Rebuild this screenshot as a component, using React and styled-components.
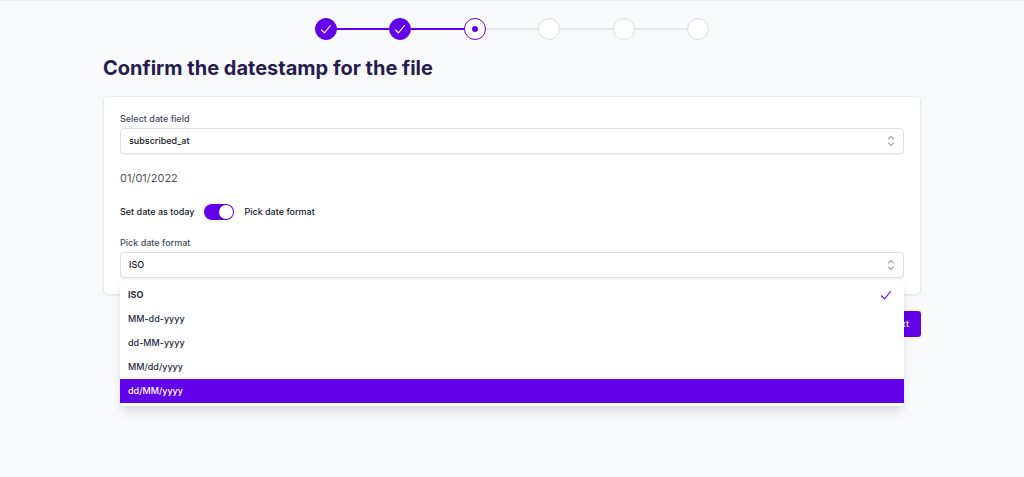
import React, { useState } from "react";
import styled, { ThemeProvider, createGlobalStyle } from "styled-components";

const theme = {
  colors: {
    bg: "#f9fafc",
    white: "#ffffff",
    primary: "#6300ea",
    heading: "#261c4f",
    label: "#414b5a",
    text: "#111827",
    option: "#262c40",
    border: "#dfe0e7",
    icon: "#a6aab4",
  },
};

const GlobalStyle = createGlobalStyle`
  * {
    box-sizing: border-box;
  }

  body {
    margin: 0;
    background-color: ${({ theme }) => theme.colors.bg};
    color: ${({ theme }) => theme.colors.text};
    font-family: Inter, "Liberation Sans", sans-serif;
    font-size: 9px;
    font-weight: 500;
    line-height: 16px;
  }

  button, select, input {
    font: inherit;
    color: inherit;
  }
`;

const Page = styled.main`
  min-height: 100vh;
  border-top: 1px solid #eff0f3;
  padding: 17px 16px;
`;

const Container = styled.div`
  max-width: 818px;
  margin: 0 auto;
`;

const StepList = styled.ol`
  list-style: none;
  display: flex;
  max-width: 394px;
  margin: 0 auto;
  padding: 0;
`;

const Step = styled.li`
  display: flex;
  align-items: center;
  flex: 1;

  &:last-child {
    flex: none;
  }

  &:not(:last-child)::after {
    content: "";
    flex: 1;
    height: 2px;
    background-color: ${({ theme, $status }) =>
      $status === "complete" ? theme.colors.primary : "#e5e6eb"};
  }
`;

const StepButton = styled.button`
  display: flex;
  align-items: center;
  justify-content: center;
  width: 22px;
  height: 22px;
  padding: 0;
  border-radius: 50%;
  cursor: pointer;
  color: ${({ theme }) => theme.colors.white};
  border: 1px solid
    ${({ theme, $status }) => ($status === "upcoming" ? "#dcdde3" : theme.colors.primary)};
  background-color: ${({ theme, $status }) =>
    $status === "complete" ? theme.colors.primary : theme.colors.white};
`;

const Dot = styled.span`
  width: 6px;
  height: 6px;
  border-radius: 50%;
  background-color: ${({ theme }) => theme.colors.primary};
`;

const Title = styled.h1`
  margin: 14px 0;
  font-size: 20px;
  line-height: 28px;
  font-weight: 700;
  color: ${({ theme }) => theme.colors.heading};
`;

const Card = styled.section`
  padding: 14px 16px 16px;
  background-color: ${({ theme }) => theme.colors.white};
  border: 1px solid #eaebef;
  border-radius: 5px;
  box-shadow: 0 1px 2px rgba(0, 0, 0, 0.06);
`;

const Field = styled.div`
  display: flex;
  flex-direction: column;
  gap: 1px;
`;

const Label = styled.label`
  color: ${({ theme }) => theme.colors.label};
`;

const Control = styled.div`
  position: relative;

  select,
  > button {
    appearance: none;
    display: block;
    width: 100%;
    height: 26px;
    padding: 0 28px 0 8px;
    text-align: left;
    background-color: ${({ theme }) => theme.colors.white};
    border: 1px solid ${({ theme }) => theme.colors.border};
    border-radius: 4px;
    box-shadow: 0 1px 1px rgba(0, 0, 0, 0.05);
    cursor: pointer;
  }
`;

const SelectorIcon = styled.svg`
  position: absolute;
  top: 6px;
  right: 6px;
  width: 14px;
  height: 14px;
  color: ${({ theme }) => theme.colors.icon};
  pointer-events: none;
`;

const DatePreview = styled.p`
  margin: 16px 0;
  font-size: 11px;
  font-weight: 400;
  color: #555555;
`;

const SwitchRow = styled.div`
  display: flex;
  align-items: center;
  gap: 10px;
  margin: 18px 0 15px;
`;

const Switch = styled.input`
  appearance: none;
  display: flex;
  width: 30px;
  height: 16px;
  margin: 0;
  padding: 1px;
  border-radius: 8px;
  cursor: pointer;
  justify-content: ${({ checked }) => (checked ? "flex-end" : "flex-start")};
  background-color: ${({ theme, checked }) => (checked ? theme.colors.primary : "#e5e7eb")};

  &::before {
    content: "";
    width: 14px;
    height: 14px;
    border-radius: 50%;
    background-color: ${({ theme }) => theme.colors.white};
  }
`;

const Options = styled.ul`
  position: absolute;
  z-index: 1;
  top: 100%;
  left: 0;
  right: 0;
  list-style: none;
  margin: 2px 0 0;
  padding: 3px 0;
  background-color: ${({ theme }) => theme.colors.white};
  border-radius: 4px;
  box-shadow: 0 0 1px rgba(0, 0, 0, 0.15), 0 6px 12px -2px rgba(0, 0, 0, 0.14);
`;

const Option = styled.li`
  display: flex;
  align-items: center;
  justify-content: space-between;
  height: 24px;
  padding: 0 12px 0 8px;
  cursor: pointer;
  font-weight: ${({ $selected }) => ($selected ? 700 : 500)};
  color: ${({ theme, $active }) => ($active ? theme.colors.white : theme.colors.option)};
  background-color: ${({ theme, $active }) => ($active ? theme.colors.primary : "transparent")};

  svg {
    color: ${({ theme, $active }) => ($active ? theme.colors.white : theme.colors.primary)};
  }
`;

const Actions = styled.div`
  display: flex;
  justify-content: flex-end;
  margin-top: 16px;
`;

const NextButton = styled.button`
  height: 26px;
  padding: 0 12px;
  border: none;
  border-radius: 3px;
  color: ${({ theme }) => theme.colors.white};
  background-color: ${({ theme }) => theme.colors.primary};
  cursor: pointer;
`;

const steps = ["complete", "complete", "current", "upcoming", "upcoming", "upcoming"];
const formats = ["ISO", "MM-dd-yyyy", "dd-MM-yyyy", "MM/dd/yyyy", "dd/MM/yyyy"];

const Check = () => (
  <svg width="12" height="12" viewBox="0 0 12 12" fill="none" stroke="currentColor" aria-hidden="true">
    <path d="M1.5 7l3 2.8 6-7.3" strokeWidth="1.1" strokeLinecap="round" strokeLinejoin="round" />
  </svg>
);

const Selector = () => (
  <SelectorIcon viewBox="0 0 14 14" fill="none" stroke="currentColor" aria-hidden="true">
    <path d="M4.5 5L7 2.5 9.5 5M4.5 9L7 11.5 9.5 9" strokeWidth="1.2" strokeLinecap="round" strokeLinejoin="round" />
  </SelectorIcon>
);

const Steps = () => (
  <nav aria-label="Progress">
    <StepList>
      {steps.map((status, i) => (
        <Step key={i} $status={status}>
          <StepButton
            type="button"
            $status={status}
            aria-label={`Step ${i + 1}`}
            aria-current={status === "current" ? "step" : undefined}
          >
            {status === "complete" && <Check />}
            {status === "current" && <Dot />}
          </StepButton>
        </Step>
      ))}
    </StepList>
  </nav>
);

const FormatPicker = () => {
  const [open, setOpen] = useState(true);
  const [selected, setSelected] = useState("ISO");
  const [active, setActive] = useState("dd/MM/yyyy");

  const choose = (format) => {
    setSelected(format);
    setOpen(false);
  };

  return (
    <Field>
      <Label id="format-label" htmlFor="format">Pick date format</Label>
      <Control>
        <button
          type="button"
          id="format"
          aria-haspopup="listbox"
          aria-expanded={open}
          aria-labelledby="format-label format"
          onClick={() => setOpen(!open)}
        >
          {selected}
        </button>
        <Selector />
        {open && (
          <Options role="listbox" aria-labelledby="format-label">
            {formats.map((format) => (
              <Option
                key={format}
                role="option"
                aria-selected={format === selected}
                $selected={format === selected}
                $active={format === active}
                onMouseEnter={() => setActive(format)}
                onClick={() => choose(format)}
              >
                {format}
                {format === selected && <Check />}
              </Option>
            ))}
          </Options>
        )}
      </Control>
    </Field>
  );
};

const App = () => {
  const [pickFormat, setPickFormat] = useState(true);

  return (
    <ThemeProvider theme={theme}>
      <GlobalStyle />
      <Page>
        <Container>
          <Steps />
          <Title>Confirm the datestamp for the file</Title>
          <Card>
            <Field>
              <Label htmlFor="date-field">Select date field</Label>
              <Control>
                <select id="date-field" defaultValue="subscribed_at">
                  <option>subscribed_at</option>
                </select>
                <Selector />
              </Control>
            </Field>
            <DatePreview>01/01/2022</DatePreview>
            <SwitchRow>
              <span>Set date as today</span>
              <Switch
                id="pick-format"
                type="checkbox"
                role="switch"
                checked={pickFormat}
                onChange={(e) => setPickFormat(e.target.checked)}
              />
              <label htmlFor="pick-format">Pick date format</label>
            </SwitchRow>
            {pickFormat && <FormatPicker />}
          </Card>
          <Actions>
            <NextButton type="button">Next</NextButton>
          </Actions>
        </Container>
      </Page>
    </ThemeProvider>
  );
};

export default App;
